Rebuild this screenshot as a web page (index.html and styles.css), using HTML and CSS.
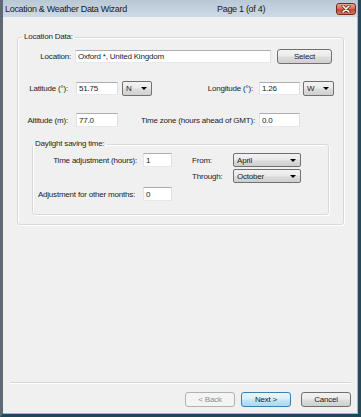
FILE: index.html
```html
<!DOCTYPE html>
<html lang="en">
<head>
    <meta charset="UTF-8">
    <title>Location &amp; Weather Data Wizard</title>
    <link rel="stylesheet" href="styles.css">
</head>
<body>
    <div class="window">
        <div class="titlebar">
            <span class="title">Location &amp; Weather Data Wizard</span>
            <span class="page">Page 1 (of 4)</span>
            <span class="close-btn">
                <svg width="10" height="8" viewBox="0 0 10 8">
                    <path d="M2 1 L8 7 M8 1 L2 7" stroke="#5a2016" stroke-width="3" stroke-linecap="round"/>
                    <path d="M2 1 L8 7 M8 1 L2 7" stroke="#fff" stroke-width="1.6" stroke-linecap="round"/>
                </svg>
            </span>
        </div>

        <div class="client">
            <fieldset class="group outer">
                <legend>Location Data:</legend>

                <div class="row row-loc">
                    <label class="lbl w53">Location:</label>
                    <div class="edit loc-edit">Oxford *, United Kingdom</div>
                    <button class="btn select-btn">Select</button>
                </div>

                <div class="row row-coord">
                    <label class="lbl w50">Latitude (&deg;):</label>
                    <div class="edit w42">51.75</div>
                    <div class="combo lat-combo">N</div>
                    <label class="lbl w101">Longitude (&deg;):</label>
                    <div class="edit w41 lon-edit">1.26</div>
                    <div class="combo lon-combo">W</div>
                </div>

                <div class="row row-alt">
                    <label class="lbl w50">Altitude (m):</label>
                    <div class="edit w42">77.0</div>
                    <label class="lbl w137">Time zone (hours ahead of GMT):</label>
                    <div class="edit w41">0.0</div>
                </div>

                <fieldset class="group inner">
                    <legend>Daylight saving time:</legend>

                    <div class="row row-a">
                        <label class="lbl w104">Time adjustment (hours):</label>
                        <div class="edit w29">1</div>
                        <label class="lbl-left from-lbl">From:</label>
                        <div class="combo month">April</div>
                    </div>

                    <div class="row row-b">
                        <label class="lbl-left through-lbl">Through:</label>
                        <div class="combo month">October</div>
                    </div>

                    <div class="row row-c">
                        <label class="lbl w102">Adjustment for other months:</label>
                        <div class="edit w29">0</div>
                    </div>
                </fieldset>
            </fieldset>

            <div class="spacer"></div>
            <div class="sep"></div>

            <div class="footer">
                <button class="btn nav-btn" disabled>&lt; Back</button>
                <button class="btn nav-btn default-btn">Next &gt;</button>
                <button class="btn nav-btn cancel-btn">Cancel</button>
            </div>
        </div>
    </div>
</body>
</html>
```

FILE: styles.css
```css
* {
    box-sizing: border-box;
}
body {
    margin: 0;
    font-family: "Liberation Sans", Arial, sans-serif;
    font-size: 8px;
    letter-spacing: -0.2px;
    color: #1c1c1c;
    background: #1f4756;
}
.window {
    width: 361px;
    height: 417px;
    display: flex;
    flex-direction: column;
    border-left: 3px solid #5f6973;
    border-right: 3px solid #23495a;
    border-bottom: 3px solid #1f4756;
    background: #f0f0f0;
}

/* title bar */
.titlebar {
    height: 17px;
    display: flex;
    align-items: center;
    background: linear-gradient(#b9c8d6, #cfdae5);
    border-right: 1px solid #a9b6c2;
    flex-shrink: 0;
}
.title {
    width: 214px;
    padding-left: 2px;
    font-size: 9px;
    letter-spacing: -0.3px;
    color: #151c24;
}
.page {
    font-size: 9px;
    letter-spacing: -0.3px;
    color: #151c24;
}
.close-btn {
    margin-left: auto;
    margin-right: 1px;
    width: 20px;
    height: 12px;
    display: flex;
    align-items: center;
    justify-content: center;
    border: 1px solid #6d2c22;
    border-radius: 3px;
    background: linear-gradient(#e8a797, #d36650 50%, #c2432b 51%, #d9775e);
}

/* client area */
.client {
    flex: 1;
    display: flex;
    flex-direction: column;
    border-right: 1px solid #a9b6c2;
    border-bottom: 1px solid #7cc3df;
}

.group {
    margin: 0;
    padding: 0;
    min-width: 0;
    border: 1px solid #d5d9dd;
    border-radius: 3px;
    box-shadow: inset 1px 1px 0 #fff, 1px 1px 0 #fff;
}
.group > legend {
    padding: 0 2px;
    line-height: 10px;
}
.outer {
    margin: 15px 0 0 14px;
    width: 327px;
    padding-bottom: 9px;
}
.outer > legend {
    margin-left: 4px;
}
.inner {
    margin: 12px 0 0 14px;
    width: 297px;
    padding-bottom: 13px;
}
.inner > legend {
    margin-left: 0;
}

.row {
    display: flex;
    align-items: center;
}
.row-loc {
    height: 15px;
    margin-top: 7px;
}
.row-coord {
    height: 15px;
    margin-top: 17px;
}
.row-alt {
    height: 14px;
    margin-top: 17px;
}
.row-a {
    height: 14px;
    margin-top: 4px;
}
.row-b {
    height: 14px;
    margin-top: 2px;
}
.row-c {
    height: 14px;
    margin-top: 4px;
}

.lbl {
    text-align: right;
    white-space: nowrap;
}
.lbl-left {
    white-space: nowrap;
}
.w53 { width: 53px; margin-right: 4px; }
.w50 { width: 50px; margin-right: 8px; }
.w101 { width: 101px; margin-right: 6px; }
.w137 { width: 137px; margin-right: 4px; }
.w104 { width: 104px; margin-right: 6px; }
.w102 { width: 102px; margin-right: 8px; }
.from-lbl {
    width: 41px;
    margin-left: 20px;
}
.through-lbl {
    width: 41px;
    margin-left: 159px;
}

/* edit boxes */
.edit {
    height: 13px;
    display: flex;
    align-items: center;
    padding-left: 2px;
    background: #fff;
    border: 1px solid;
    border-color: #abadb3 #dbdfe6 #e3e9ef #e2e3ea;
    white-space: nowrap;
}
.row-alt .edit,
.inner .edit {
    height: 14px;
}
.loc-edit { width: 196px; }
.w42 { width: 42px; }
.w41 { width: 41px; }
.w29 { width: 29px; }

/* combo boxes */
.combo {
    height: 15px;
    display: flex;
    align-items: center;
    padding-left: 3px;
    border: 1px solid #707070;
    border-radius: 2px;
    background: linear-gradient(#f2f2f2, #ebebeb 45%, #dddddd 55%, #cfcfcf);
}
.combo::after {
    content: "";
    margin-left: auto;
    margin-right: 4px;
    border-top: 3px solid #000;
    border-left: 3px solid transparent;
    border-right: 3px solid transparent;
}
.lat-combo {
    width: 30px;
    margin-left: 4px;
}
.lon-combo {
    width: 31px;
    margin-left: 3px;
}
.month {
    width: 68px;
    height: 14px;
}

/* buttons */
.btn {
    font-family: "Liberation Sans", Arial, sans-serif;
    font-size: 8px;
    letter-spacing: -0.2px;
    color: #1c1c1c;
    padding: 0;
    height: 15px;
    border: 1px solid #707070;
    border-radius: 3px;
    background: linear-gradient(#f2f2f2, #ebebeb 45%, #dddddd 55%, #cfcfcf);
}
.select-btn {
    width: 55px;
    margin-left: 6px;
}
.nav-btn {
    width: 50px;
}
.nav-btn:disabled {
    color: #8d8d8d;
    border-color: #adb2b5;
    background: #f4f4f4;
}
.default-btn {
    margin-left: 6px;
    border-color: #3c7fb1;
    background: linear-gradient(#eaf6fd, #d9f0fc 45%, #bee6fd 55%, #a7d9f5);
}
.cancel-btn {
    margin-left: 10px;
}

.spacer {
    flex: 1;
}
.sep {
    height: 2px;
    margin: 0 6px 8px 7px;
    border-top: 1px solid #d5d5d5;
    border-bottom: 1px solid #fff;
}
.footer {
    display: flex;
    justify-content: flex-end;
    padding: 0 6px 6px 0;
}
```
